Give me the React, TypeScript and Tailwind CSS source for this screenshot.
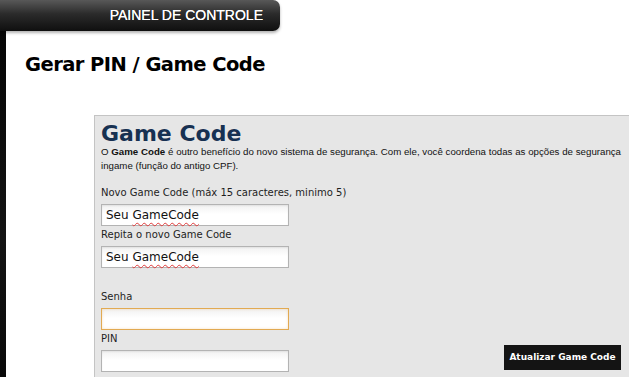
import React from "react";

const tahoma = "font-['DejaVu_Sans',Verdana,sans-serif]";

function FakeInput({ value, focused }: { value?: string; focused?: boolean }) {
    return (
        <div
            className={`${focused ? 'border-[#e2aa52] shadow-[inset_0_0_3px_rgba(226,170,82,0.35)]' : 'border-[#b3b3b3] shadow-[inset_0_1px_2px_rgba(0,0,0,0.07)]'} flex h-[22px] w-[188px] items-center border bg-[linear-gradient(180deg,#f1f1f1_0%,#ffffff_45%,#ffffff_100%)] pl-[4px]`}>
            {value && (
                <span className={`${tahoma} text-[12px] leading-none text-[#111]`}>
                    Seu <span className="underline decoration-wavy decoration-[#e03a3a] decoration-1 underline-offset-[3px]">GameCode</span>
                </span>
            )}
        </div>
    );
}

function Label({ children }: { children: React.ReactNode }) {
    return <div className={`${tahoma} text-[10px] leading-[14px] text-[#1e1e1e]`}>{children}</div>;
}

export default function App() {
    return (
        <div className="flex h-[377px] w-full flex-col overflow-hidden bg-white">
            <header className="relative z-10 flex h-[31px] w-[280px] shrink-0 items-center justify-end rounded-r-[7px] bg-[linear-gradient(180deg,#585858_0%,#2b2b2b_45%,#0f0f0f_100%)] pr-[17px] shadow-[0_2px_3px_rgba(0,0,0,0.3)]">
                <span className="font-['Liberation_Sans',Arial,sans-serif] text-[14px] text-white [text-shadow:0_0_0.4px_#fff]">PAINEL DE CONTROLE</span>
            </header>
            <div className="flex min-h-0 flex-1">
                <aside className="w-[6px] shrink-0 bg-[linear-gradient(180deg,#050505_0%,#141414_60%,#090909_100%)]" />
                <main className="flex min-w-0 flex-1 flex-col">
                    <h1 className={`${tahoma} ml-[19px] mt-[24px] text-[19.5px] font-bold leading-[20px] tracking-[-0.55px] text-black`}>
                        Gerar PIN / Game Code
                    </h1>
                    <section className="ml-[88px] mt-[40px] flex-1 border border-b-0 border-r-0 border-[#c4c4c4] bg-[#e6e6e6] pl-[6px] pr-[8px] pt-[7px]">
                        <h2 className={`${tahoma} text-[22px] font-bold leading-[22px] text-[#173152]`}>Game Code</h2>
                        <div className="font-['Liberation_Sans',Arial,sans-serif] text-[9.7px] leading-[14px] text-[#111]">
                            <p className="text-justify [text-align-last:justify]">
                                O <b>Game Code</b> é outro benefício do novo sistema de segurança. Com ele, você coordena todas as opções de segurança
                            </p>
                            <p>ingame (função do antigo CPF).</p>
                        </div>

                        <div className="mt-[13px]">
                            <Label>Novo Game Code (máx 15 caracteres, minimo 5)</Label>
                            <div className="mt-[4px]"><FakeInput value="Seu GameCode" /></div>
                        </div>
                        <div className="mt-[2px]">
                            <Label>Repita o novo Game Code</Label>
                            <div className="mt-[4px]"><FakeInput value="Seu GameCode" /></div>
                        </div>
                        <div className="mt-[22px]">
                            <Label>Senha</Label>
                            <div className="mt-[4px]"><FakeInput focused /></div>
                        </div>
                        <div className="mt-[2px] flex items-end justify-between">
                            <div>
                                <Label>PIN</Label>
                                <div className="mt-[4px]"><FakeInput /></div>
                            </div>
                            <button className={`${tahoma} mb-[2px] h-[25px] w-[117px] bg-[#141414] text-[9px] font-bold text-white`}>
                                Atualizar Game Code
                            </button>
                        </div>
                    </section>
                </main>
            </div>
        </div>
    );
}
